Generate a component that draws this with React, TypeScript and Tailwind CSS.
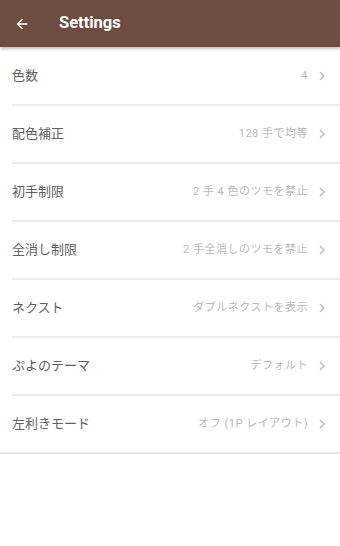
import React from "react";

const rows: [string, string][] = [
  ["色数", "4"],
  ["配色補正", "128 手で均等"],
  ["初手制限", "2 手 4 色のツモを禁止"],
  ["全消し制限", "2 手全消しのツモを禁止"],
  ["ネクスト", "ダブルネクストを表示"],
  ["ぷよのテーマ", "デフォルト"],
  ["左利きモード", "オフ (1P レイアウト)"],
];

export default function App() {
  return (
    <div
      className="w-[340px] h-[546px] bg-white overflow-hidden"
      style={{ fontFamily: '"Roboto", "Noto Sans CJK JP", sans-serif' }}
    >
      <div className="h-[47px] bg-[#6d4c41] flex items-center shadow-[0_2px_3px_rgba(0,0,0,0.25)] relative z-10">
        <svg className="ml-[14px] w-[16px] h-[16px]" viewBox="0 0 24 24" fill="white">
          <path d="M20 11H7.83l5.59-5.59L12 4l-8 8 8 8 1.41-1.41L7.83 13H20v-2z" />
        </svg>
        <span className="ml-[29px] text-white text-[16.5px] font-bold">Settings</span>
      </div>
      <div className="pt-[1px]">
        {rows.map(([label, value], i) => (
          <div
            key={label}
            className={
              "h-[58px] flex items-center " +
              (i === rows.length - 1 ? "border-b-2 border-[#e6e6e6]" : "ml-[12px] border-b-2 border-[#ececec]")
            }
          >
            <span className={"text-[13px] text-[#606060] " + (i === rows.length - 1 ? "ml-[12px]" : "")}>{label}</span>
            <span className="ml-auto text-[11px] text-[#b8b8b8] tracking-[0.5px]">{value}</span>
            <svg className="ml-[8px] mr-[12px] w-[12px] h-[12px]" viewBox="0 0 24 24" fill="none" stroke="#b5b5b5" strokeWidth="2.5">
              <path d="M8 4l8 8-8 8" />
            </svg>
          </div>
        ))}
      </div>
    </div>
  );
}
